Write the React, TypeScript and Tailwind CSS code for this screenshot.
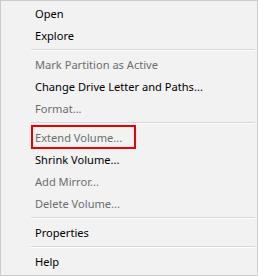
const items: (string | null | { label: string; disabled?: boolean; boxed?: boolean })[] = [
  { label: 'Open' },
  { label: 'Explore' },
  null,
  { label: 'Mark Partition as Active', disabled: true },
  { label: 'Change Drive Letter and Paths...' },
  { label: 'Format...', disabled: true },
  null,
  { label: 'Extend Volume...', disabled: true, boxed: true },
  { label: 'Shrink Volume...' },
  { label: 'Add Mirror...', disabled: true },
  { label: 'Delete Volume...', disabled: true },
  null,
  { label: 'Properties' },
  null,
  { label: 'Help' },
];

const App = () => {
  return (
    <div className="w-[258px] h-[276px] bg-white">
      <div
        className="w-[258px] h-[276px] border border-[#cccccc] bg-[#f2f2f2] pt-[2px] pb-[2px] flex flex-col text-[11.1px] text-black"
        style={{ fontFamily: '"Segoe UI", "Noto Sans", sans-serif' }}
      >
        {items.map((item, i) => {
          if (item === null || typeof item === 'string') {
            return (
              <div key={i} className="h-[7px] flex items-start pt-[2px] pl-[30px] pr-[2px]">
                <div className="w-full border-t border-[#d7d7d7] border-b border-b-white" />
              </div>
            );
          }
          return (
            <div
              key={i}
              className={`relative h-[22px] flex items-center pl-[34px] leading-none ${
                item.disabled ? 'text-[#6d6d6d]' : 'text-black'
              }`}
            >
              {item.label}
              {item.boxed && (
                <div className="absolute left-[30px] -top-[2px] w-[105px] h-[24px] border-2 border-[#ee0000]" />
              )}
            </div>
          );
        })}
      </div>
    </div>
  );
};

export default App;
